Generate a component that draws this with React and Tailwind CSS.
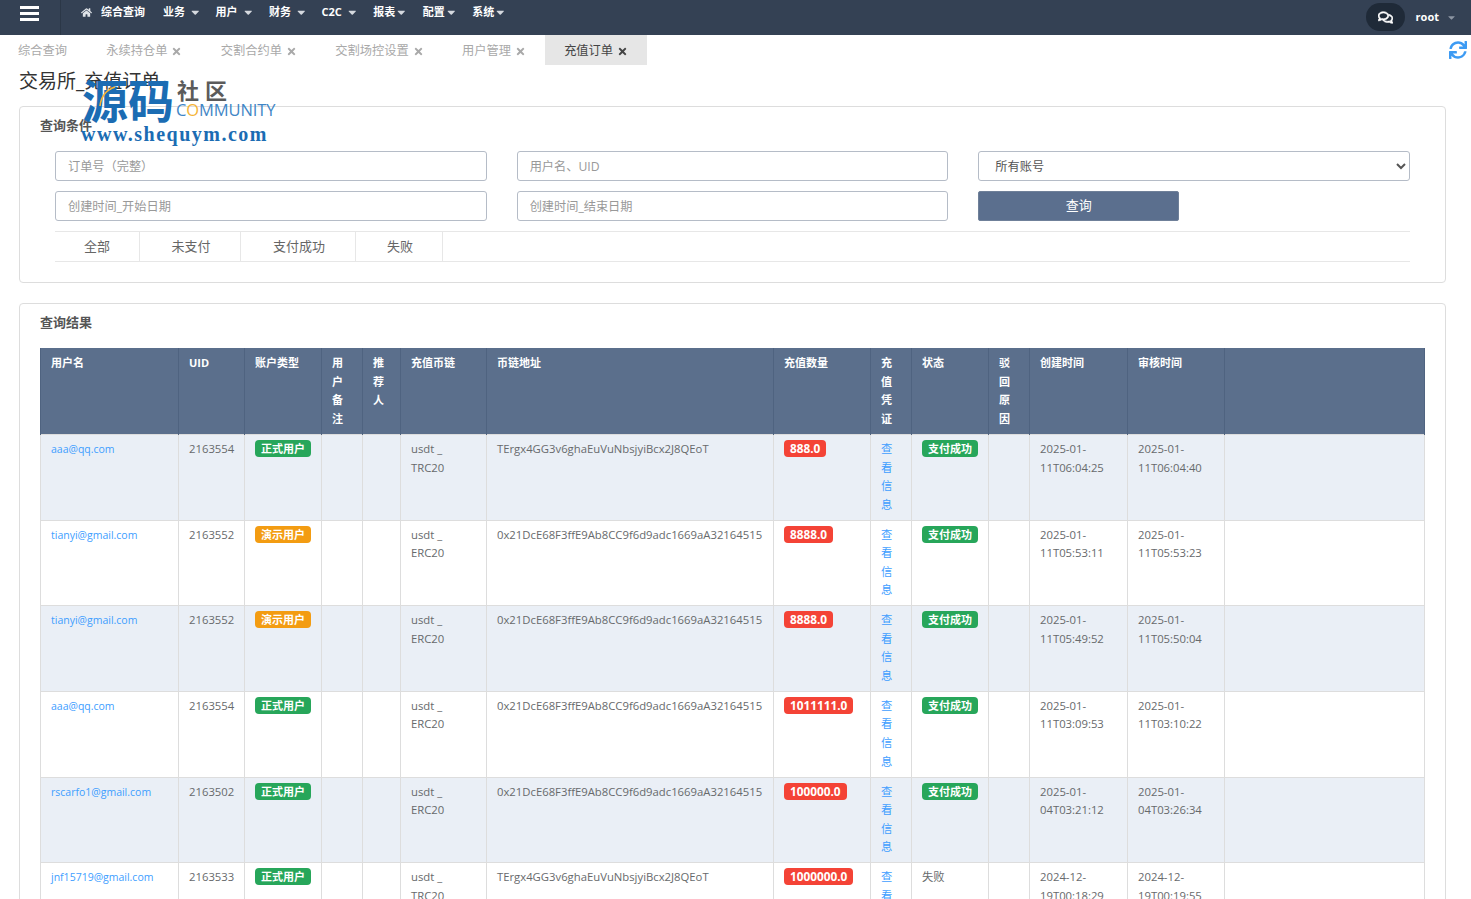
import React from 'react';
import { FaHome, FaTimes, FaSync, FaRegComments, FaCaretDown } from 'react-icons/fa';

const font = { fontFamily: '"Open Sans","Noto Sans CJK SC",sans-serif' };

const navItems = [
  ['业务', 'ml-[18px]', 'ml-[4px]'],
  ['用户', 'ml-[14px]', 'ml-[4px]'],
  ['财务', 'ml-[15px]', 'ml-[4px]'],
  ['C2C', 'ml-[14px]', 'ml-[4px]'],
  ['报表', 'ml-[15px]', 'ml-[0px]'],
  ['配置', 'ml-[15px]', 'ml-[0px]'],
  ['系统', 'ml-[15px]', 'ml-[0px]'],
];
const tabs = ['永续持仓单', '交割合约单', '交割场控设置', '用户管理'];
const filters = [
  ['全部', 'w-[85px]'],
  ['未支付', 'w-[101px] pl-[2px]'],
  ['支付成功', 'w-[115px] pl-[2px]'],
  ['失败', 'w-[87px] pl-[2px]'],
];
const A = 'TErgx4GG3v6ghaEuVuNbsjyiBcx2J8QEoT';
const B = '0x21DcE68F3ffE9Ab8CC9f6d9adc1669aA32164515';
const rows = [
  ['aaa@qq.com', '2163554', 1, 'TRC20', A, '888.0', 1, '2025-01-', '11T06:04:25', '2025-01-', '11T06:04:40'],
  ['tianyi@gmail.com', '2163552', 0, 'ERC20', B, '8888.0', 1, '2025-01-', '11T05:53:11', '2025-01-', '11T05:53:23'],
  ['tianyi@gmail.com', '2163552', 0, 'ERC20', B, '8888.0', 1, '2025-01-', '11T05:49:52', '2025-01-', '11T05:50:04'],
  ['aaa@qq.com', '2163554', 1, 'ERC20', B, '1011111.0', 1, '2025-01-', '11T03:09:53', '2025-01-', '11T03:10:22'],
  ['rscarfo1@gmail.com', '2163502', 1, 'ERC20', B, '100000.0', 1, '2025-01-', '04T03:21:12', '2025-01-', '04T03:26:34'],
  ['jnf15719@gmail.com', '2163533', 1, 'TRC20', A, '1000000.0', 0, '2024-12-', '19T00:18:29', '2024-12-', '19T00:19:55'],
];
const widths = ['w-[138px]', 'w-[66px]', 'w-[77px]', 'w-[41px]', 'w-[38px]', 'w-[86px]', 'w-[287px]', 'w-[97px]', 'w-[41px]', 'w-[77px]', 'w-[41px]', 'w-[98px]', 'w-[97px]', 'w-[200px]'];
const heads = ['用户名', 'UID', '账户类型', '用户备注', '推荐人', '充值币链', '币链地址', '充值数量', '充值凭证', '状态', '驳回原因', '创建时间', '审核时间', ''];

const th = 'border-x border-[#4f6380] px-[10px] pt-[6px] pb-[6px] text-left align-top font-bold text-white text-[11px] leading-[18.6px]';
const td = 'border border-[#dddddd] px-[10px] pt-[5px] pb-[5px] align-top leading-[18.55px]';
const body = 'text-[#676a6c] text-[11.3px]';
const badge = 'inline-block h-[17px] rounded-[4px] px-[6px] text-[11px] font-bold leading-[17px] text-white whitespace-nowrap align-top';
const redBadge = 'inline-block h-[17px] rounded-[4px] px-[6px] text-[11.8px] font-bold leading-[17px] text-white whitespace-nowrap align-top bg-[#f44336]';
const input = 'h-[30px] w-full rounded-[3px] border border-[#b5bcc7] bg-white px-3 text-[12.2px] outline-none placeholder:text-[#999999]';

function Watermark() {
  return (
    <div className="pointer-events-none absolute left-[81px] top-[78px] w-[210px]">
      <div className="flex items-start">
        <div className="relative ml-[1px] text-[46px] font-bold leading-[44px] text-[#1b6cb3]">
          源码
          <svg className="absolute left-[17px] top-[8px]" width="18" height="22" viewBox="0 0 18 22" fill="none">
            <path d="M1 20C2 11 7 4 16 1" stroke="#f5b335" strokeWidth="1.6" />
          </svg>
        </div>
        <div className="ml-[2px] flex flex-col">
          <span className="ml-[1px] text-[22px] font-bold leading-[24px] tracking-[6px] text-[#5b5b5b]">社区</span>
          <span className="text-[16.5px] font-medium leading-[16px] tracking-[-0.1px] text-[#3f86c6]">
            C<span className="text-[#f5b335]">O</span>MMUNITY
          </span>
        </div>
      </div>
      <div className="mt-[1px] whitespace-nowrap text-[20px] font-bold leading-[22px] tracking-[1.5px] text-[#1b6cb3]" style={{ fontFamily: '"Liberation Serif",serif' }}>
        www.shequym.com
      </div>
    </div>
  );
}

export default function App() {
  return (
    <div className="relative h-[899px] w-[1471px] overflow-hidden bg-white text-[#676a6c]" style={font}>
      <header className="flex h-[35px] items-start bg-[#344154] text-[11px] font-bold text-white">
        <div className="flex h-[35px] w-[61px] flex-col gap-[3px] border-r border-[#2b3747] pl-[20px] pt-[6px]">
          <span className="h-[3px] w-[19px] bg-white" />
          <span className="h-[3px] w-[19px] bg-white" />
          <span className="h-[3px] w-[19px] bg-white" />
        </div>
        <nav className="flex h-[25px] items-center">
          <FaHome className="ml-[20px] text-[11px] text-[#dfe3e8]" />
          <span className="ml-[9px]">综合查询</span>
          {navItems.map(([t, ml, cm]) => (
            <span key={t} className={`flex items-center ${ml}`}>
              {t}
              <FaCaretDown className={`${cm} text-[12.5px] text-[#d5d9df]`} />
            </span>
          ))}
        </nav>
        <div className="ml-auto flex items-center">
          <span className="mt-[3px] flex h-[28px] w-[39px] items-center justify-center rounded-[14px] bg-[#1f2a38]">
            <FaRegComments className="stroke-white text-[15px] [stroke-width:24px]" />
          </span>
          <span className="ml-[11px] mt-[3px]">root</span>
          <FaCaretDown className="ml-[7px] mr-[14px] mt-[3px] text-[11px] text-[#8c95a2]" />
        </div>
      </header>

      <div className="flex h-[30px] items-center text-[12.25px] text-[#a9a9a9]">
        <span className="flex h-[30px] items-center pl-[18px] pr-[20px] pt-[2px]">综合查询</span>
        {tabs.map((t) => (
          <span key={t} className="flex h-[30px] items-center px-[19.15px] pt-[2px]">
            {t}
            <FaTimes className="ml-[4px] text-[11px] text-[#a9a9a9]" />
          </span>
        ))}
        <span className="flex h-[30px] w-[102px] items-center bg-[#e6e6e6] pl-[19px] pt-[2px] text-[#444444]">
          充值订单
          <FaTimes className="ml-[4px] text-[11px] text-[#444444]" />
        </span>
        <FaSync className="ml-auto mr-[4px] mt-[-1px] text-[18px] text-[#3d9bf3]" />
      </div>

      <h1 className="ml-[19px] mt-[2px] text-[19px] font-normal leading-[28px] text-[#333333]">交易所_充值订单</h1>

      <section className="mx-[19px] mt-[11px] h-[177px] w-[1427px] rounded-[4px] border border-[#dddddd]">
        <h2 className="ml-[20px] mt-[9px] text-[13px] font-bold leading-[19px] text-[#555555]">查询条件</h2>
        <div className="mx-[35px] mt-[16px] grid grid-cols-3 gap-x-[30px] gap-y-[10px]">
          <input className={input} placeholder="订单号（完整）" />
          <input className={input} placeholder="用户名、UID" />
          <select className="h-[30px] w-full rounded-[3px] border border-[#b5bcc7] bg-white px-3 text-[12.2px] text-[#555555]" defaultValue="所有账号">
            <option>所有账号</option>
          </select>
          <input className={input} placeholder="创建时间_开始日期" />
          <input className={input} placeholder="创建时间_结束日期" />
          <button className="h-[30px] w-[201px] rounded-[2px] border border-[#6f8099] bg-[#5b6f8e] text-[13px] text-white">查询</button>
        </div>
        <div className="mx-[35px] mt-[10px] flex h-[31px] border-y border-[#e7e7e7] text-[13px] text-[#666666]">
          {filters.map(([t, w]) => (
            <span key={t} className={`flex items-center justify-center border-r border-[#e7e7e7] ${w}`}>{t}</span>
          ))}
        </div>
      </section>

      <section className="mx-[19px] mt-[20px] w-[1427px] rounded-[4px] border border-[#dddddd] px-[20px] pb-5">
        <h2 className="mt-[9px] text-[13px] font-bold leading-[19px] text-[#555555]">查询结果</h2>
        <table className="mt-[16px] w-[1384px] table-fixed border-collapse">
          <colgroup>
            {widths.map((w, i) => <col key={i} className={w} />)}
          </colgroup>
          <thead>
            <tr className="bg-[#5b6f8c]">
              {heads.map((h, i) => <th key={i} className={th}>{h}</th>)}
            </tr>
          </thead>
          <tbody>
            {rows.map((r, i) => (
              <tr key={i} className={`${i === 0 ? 'h-[85px]' : 'h-[85.7px]'} ${i % 2 === 0 ? 'bg-[#eaeff6]' : 'bg-white'}`}>
                <td className={`${td} whitespace-nowrap text-[#409eff] text-[10.5px]`}>{r[0]}</td>
                <td className={`${td} ${body}`}>{r[1]}</td>
                <td className={td}>
                  <span className={`${badge} ${r[2] ? 'bg-[#27a65a]' : 'bg-[#f39c12]'}`}>{r[2] ? '正式用户' : '演示用户'}</span>
                </td>
                <td className={td} />
                <td className={td} />
                <td className={`${td} ${body}`}>usdt _<br />{r[3]}</td>
                <td className={`${td} ${body} whitespace-nowrap`}>{r[4]}</td>
                <td className={td}><span className={redBadge}>{r[5]}</span></td>
                <td className={`${td} text-[#409eff] text-[11.3px]`}>查看信息</td>
                <td className={`${td} ${body}`}>
                  {r[6] ? <span className={`${badge} bg-[#27a65a]`}>支付成功</span> : '失败'}
                </td>
                <td className={td} />
                <td className={`${td} ${body}`}>{r[7]}<br />{r[8]}</td>
                <td className={`${td} ${body}`}>{r[9]}<br />{r[10]}</td>
                <td className={td} />
              </tr>
            ))}
          </tbody>
        </table>
      </section>

      <Watermark />
    </div>
  );
}
